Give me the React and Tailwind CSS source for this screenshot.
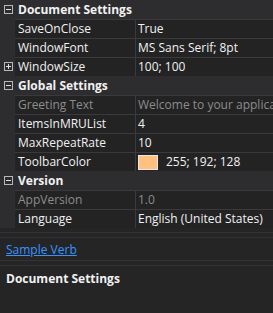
const Toggle = ({ open }) => (
    <span className="w-[9px] h-[9px] border border-[#b8b8b8] flex items-center justify-center relative">
        <span className="absolute w-[5px] h-px bg-[#e0e0e0]" />
        {!open && <span className="absolute w-px h-[5px] bg-[#e0e0e0]" />}
    </span>
)

const Category = ({ label }) => (
    <div className="h-[19px] flex items-center bg-[#2d2d30]">
        <div className="w-[15px] flex justify-center pl-[1px]">
            <Toggle open />
        </div>
        <span className="pl-[3px] font-bold text-[#f1f1f1]">{label}</span>
    </div>
)

const Row = ({ name, value, disabled, expandable, swatch }) => (
    <div className="h-[19px] flex">
        <div className="w-[15px] flex items-center justify-center pl-[1px] bg-[#2d2d30]">
            {expandable && <Toggle />}
        </div>
        <div className={`w-[121px] flex items-center pl-[3px] border-t border-r border-[#3a3a3c] bg-[#232324] whitespace-nowrap overflow-hidden ${disabled ? 'text-[#8c8c8c]' : 'text-[#f1f1f1]'}`}>
            {name}
        </div>
        <div className={`flex-1 flex items-center pl-[2px] border-t border-[#3a3a3c] bg-[#232324] whitespace-nowrap overflow-hidden ${disabled ? 'text-[#8c8c8c]' : 'text-[#f1f1f1]'}`}>
            {swatch && <span className="w-[20px] h-[15px] mr-[8px] border border-[#e8e8e8] bg-[#ffc080]" />}
            {value}
        </div>
    </div>
)

export default function App() {
    return (
        <div className="w-[273px] h-[313px] bg-[#252526] text-[12px] leading-none overflow-hidden" style={{ fontFamily: '"Open Sans", "Noto Sans", sans-serif' }}>
            <div className="flex flex-col">
                <Category label="Document Settings" />
                <Row name="SaveOnClose" value="True" />
                <Row name="WindowFont" value="MS Sans Serif; 8pt" />
                <Row name="WindowSize" value="100; 100" expandable />
                <Category label="Global Settings" />
                <Row name="Greeting Text" value="Welcome to your application!" disabled />
                <Row name="ItemsInMRUList" value="4" />
                <Row name="MaxRepeatRate" value="10" />
                <Row name="ToolbarColor" value="255; 192; 128" swatch />
                <Category label="Version" />
                <Row name="AppVersion" value="1.0" disabled />
                <Row name="Language" value="English (United States)" />
            </div>
            <div className="h-[6px] mt-[4px] border-t border-b border-[#333337]" />
            <div className="h-[22px] flex items-center px-[6px] pt-[2px]">
                <span className="text-[#3794ff] underline">Sample Verb</span>
            </div>
            <div className="h-[6px] border-t border-b border-[#333337]" />
            <div className="px-[6px] pt-[7px] font-bold text-[#f1f1f1]">Document Settings</div>
        </div>
    )
}
